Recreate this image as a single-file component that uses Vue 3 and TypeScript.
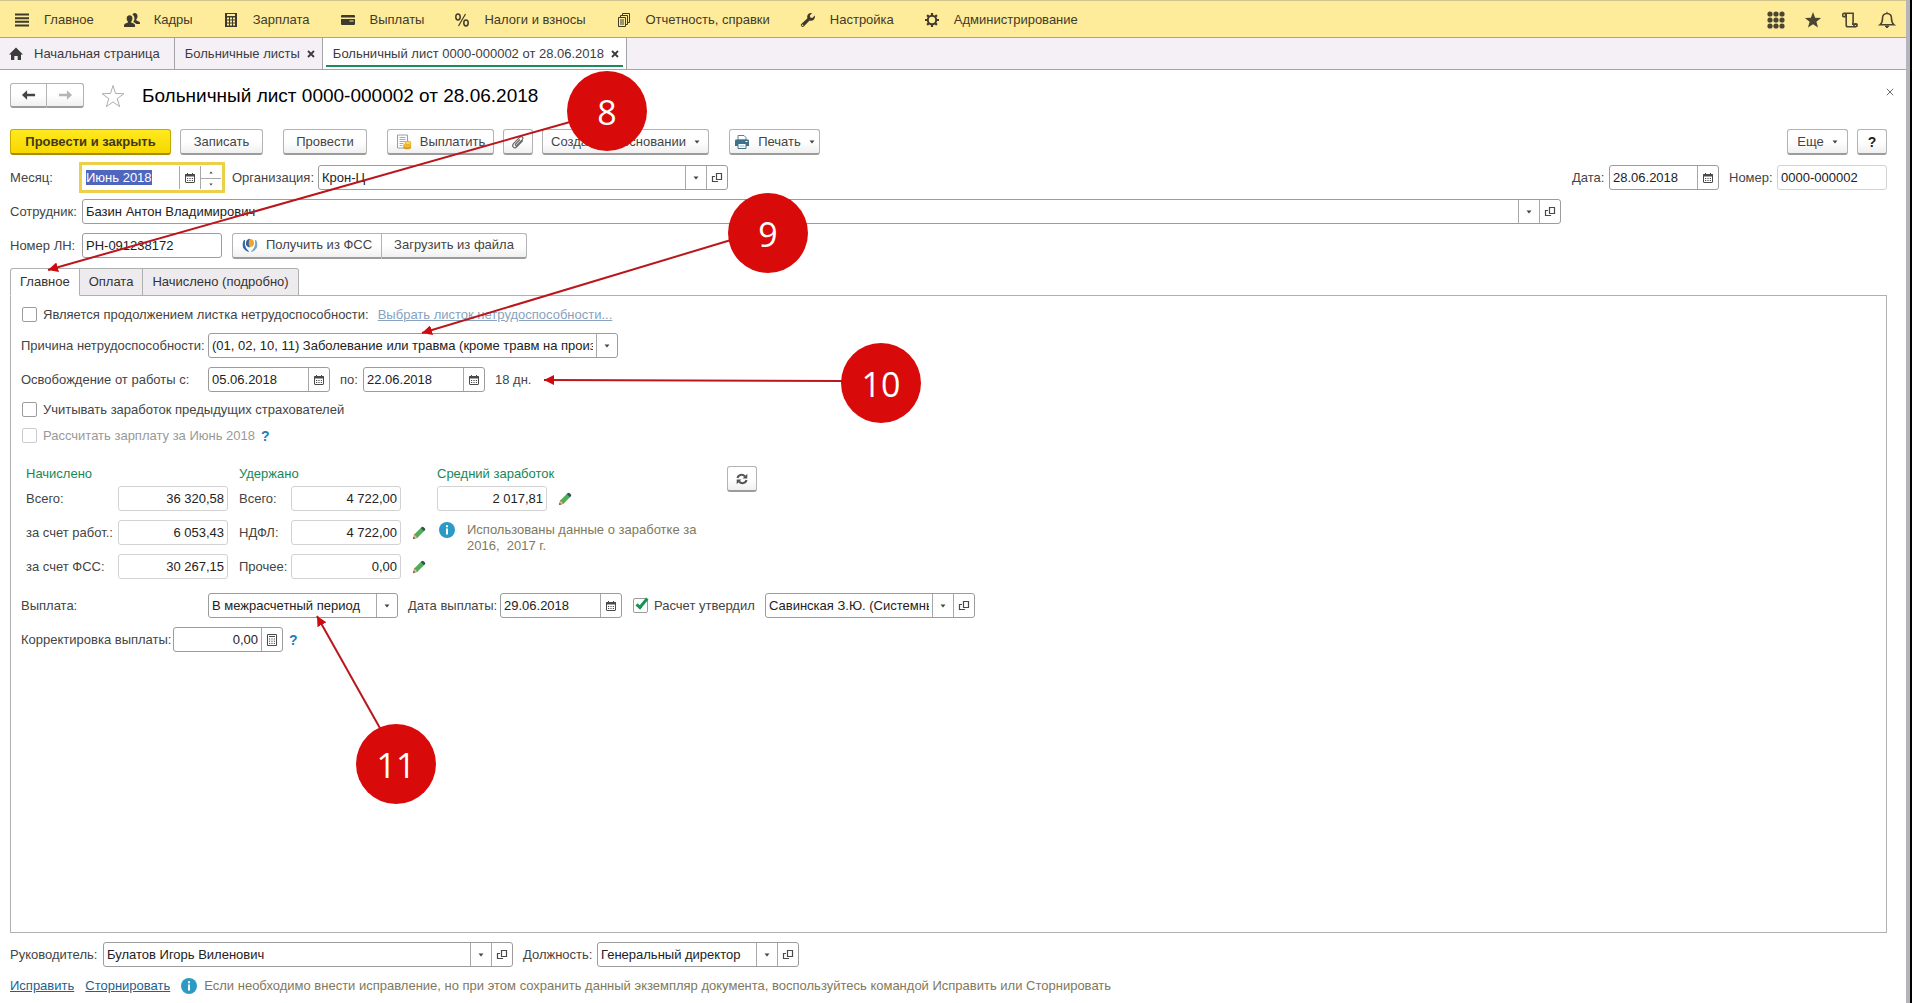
<script setup lang="ts">
import { onMounted, ref } from 'vue'

interface MenuItem {
  icon: string
  text: string
}

interface Callout {
  n: number
  cx: number
  cy: number
  fromX: number
  fromY: number
  toX: number
  toY: number
}

const menu: MenuItem[] = [
  { icon: 'lines', text: 'Главное' },
  { icon: 'people', text: 'Кадры' },
  { icon: 'calc', text: 'Зарплата' },
  { icon: 'card', text: 'Выплаты' },
  { icon: 'percent', text: 'Налоги и взносы' },
  { icon: 'docs', text: 'Отчетность, справки' },
  { icon: 'wrench', text: 'Настройка' },
  { icon: 'gear', text: 'Администрирование' },
]

const tools: MenuItem[] = [
  { icon: 'grid', text: 'Меню функций' },
  { icon: 'star', text: 'Избранное' },
  { icon: 'scroll', text: 'История' },
  { icon: 'bell', text: 'Оповещения' },
]

const callouts: Callout[] = [
  { n: 8, cx: 607, cy: 111, fromX: 570, fromY: 122, toX: 48, toY: 270 },
  { n: 9, cx: 768, cy: 233, fromX: 731, fromY: 240, toX: 422, toY: 333 },
  { n: 10, cx: 881, cy: 383, fromX: 844, fromY: 381, toX: 544, toY: 380 },
  { n: 11, cx: 396, cy: 764, fromX: 381, fromY: 730, toX: 317, toY: 616 },
]

const month = ref('Июнь 2018')
const monthInput = ref<HTMLInputElement | null>(null)
const employee = ref('Базин Антон Владимирович')
const sheetNumber = ref('РН-091238172')
const docDate = ref('28.06.2018')
const docNumber = ref('0000-000002')
const dateFrom = ref('05.06.2018')
const dateTo = ref('22.06.2018')
const payDate = ref('29.06.2018')
const isContinuation = ref(false)
const usePrevious = ref(false)
const approved = ref(true)

onMounted(() => {
  monthInput.value?.focus()
  monthInput.value?.select()
})
</script>

<template>
  <div class="app">
    <svg class="defs" width="0" height="0" aria-hidden="true">
      <symbol id="i-lines" viewBox="0 0 16 16"><path d="M1 2.500h14M1 6.200h14M1 9.800h14M1 13.500h14" stroke="currentColor" stroke-width="2" /></symbol>
      <symbol id="i-people" viewBox="0 0 16 16"><g fill="currentColor"><path d="M10.600 1c2 0 3 1.300 2.900 3.200 0 1.400-.5 2.500-1.200 3.100v1l3 1.400c.6.400.7 1 .7 2.300h-3.800c-.6-1-1.500-1.500-3-2.100.9-1.100 1.300-2.300 1.200-3.900-.1-1.500-.8-2.600-1.900-3.200.4-1.100 1.100-1.800 2.100-1.800z" /><path d="M5.600 3.300c1.900 0 2.900 1.300 2.800 3.100 0 1.300-.5 2.400-1.200 3v1l3 1.400c.7.400.9 1.200.9 3.200H0c0-2 .2-2.800.9-3.200l3-1.400v-1c-.7-.6-1.200-1.700-1.200-3 0-1.800 1-3.100 2.900-3.100z" /></g></symbol>
      <symbol id="i-calc" viewBox="0 0 16 16"><path d="M2 1h12v14H2z" fill="currentColor" /><path d="M4 3h8M4 6.500h2M7 6.500h2M10 6.500h2M4 9.500h2M7 9.500h2M10 9.500h2M4 12.500h2M7 12.500h2M10 12.500h2" stroke="#feec9a" stroke-width="1.800" /></symbol>
      <symbol id="i-card" viewBox="0 0 16 16"><path d="M2 3h12q1 0 1 1v1.500H1V4q0-1 1-1zM1 7h14v5q0 1-1 1H2q-1 0-1-1z" fill="currentColor" /><path d="M9.500 9h4" stroke="#feec9a" /></symbol>
      <symbol id="i-percent" viewBox="0 0 16 16"><g fill="none" stroke="currentColor" stroke-width="1.500"><ellipse cx="4" cy="5" rx="2.200" ry="2.900" /><ellipse cx="12" cy="11" rx="2.200" ry="2.900" /><path d="M11.500 2l-7 12" stroke-width="1.200" /></g></symbol>
      <symbol id="i-docs" viewBox="0 0 16 16"><g fill="none" stroke="currentColor"><path d="M2.500 5.500h7v9h-7zM4.500 5V3.500h7v9H10M6.500 3V1.500h7v9H12M4 8h4M4 10h4M4 12h4" /></g></symbol>
      <symbol id="i-wrench" viewBox="0 0 16 16"><path d="M14.800 3.600l-2.500 2.300-2-.4-.5-2L12 1.200C9.700.5 7.400 2 7.200 4.400c-.1.700 0 1.200.2 1.800L1.300 12c-1.500 1.500.9 3.900 2.500 2.500L9.600 8.500c3 1.200 6-1.700 5.200-4.900zM2.500 14a.8.8 0 1 1 .1-1.600.8.8 0 0 1-.1 1.600z" fill="currentColor" /></symbol>
      <symbol id="i-gear" viewBox="0 0 16 16"><g fill="none" stroke="currentColor"><circle cx="8" cy="8" r="4.200" stroke-width="2" /><path d="M8 1v2.500M8 12.500V15M1 8h2.500M12.500 8H15M3.100 3.100l1.700 1.700M11.200 11.200l1.700 1.700M12.900 3.100l-1.700 1.700M4.800 11.200l-1.700 1.700" stroke-width="2.200" /></g></symbol>
      <symbol id="i-grid" viewBox="0 0 18 18"><g fill="currentColor"><circle v-for="k in 9" :key="k" :cx="3 + ((k - 1) % 3) * 6" :cy="3 + Math.floor((k - 1) / 3) * 6" r="2.600" /></g></symbol>
      <symbol id="i-star" viewBox="0 0 18 18"><path d="M9 1l2.100 5.700 6 .2-4.700 3.800 1.600 5.900L9 13.200l-5 3.400 1.600-5.900L.9 6.900l6-.2z" fill="currentColor" /></symbol>
      <symbol id="i-scroll" viewBox="0 0 18 18"><g fill="none" stroke="currentColor" stroke-width="1.600"><path d="M1.800 5.800V3.500q0-1.300 1.300-1.300h9v9.500M1.800 5.800h2.700V2.500M5.200 2.500V14q0 1.800 1.800 1.800h7.500M11.800 14v-2.300M15.800 15.800v-2.600h-3.200" /><circle cx="14.300" cy="14.200" r="1.500" /></g></symbol>
      <symbol id="i-bell" viewBox="0 0 18 18"><path d="M9 2.500c-3 0-4.500 2-4.500 5 0 3.500-.8 5-2.500 6.300h14c-1.700-1.300-2.500-2.800-2.500-6.300 0-3-1.500-5-4.500-5z" fill="none" stroke="currentColor" stroke-width="1.600" /><path d="M9 .8v2M7 15h4l-2 2z" fill="currentColor" stroke="currentColor" /></symbol>
      <symbol id="i-home" viewBox="0 0 16 16"><path d="M8 1.500l7 7h-2V14H9.700v-4H6.300v4H3V8.500H1z" fill="currentColor" /></symbol>
      <symbol id="i-cal" viewBox="0 0 12 12"><path d="M2 2.500h8q.5 0 .5.500v7q0 .5-.5.500H2q-.5 0-.5-.5V3q0-.5.500-.5z" fill="#fff" stroke="#4a4a4a" /><path d="M1.500 2.500h9v1.500h-9zM3.500 1v1.500M8.500 1v1.500" fill="#4a4a4a" stroke="#4a4a4a" /><path d="M3 6.500h1.200M5.400 6.500h1.200M7.800 6.500H9M3 8.500h1.200M5.400 8.500h1.200M7.800 8.500H9" stroke="#4a4a4a" /></symbol>
      <symbol id="i-smallcalc" viewBox="0 0 12 12"><path d="M1.500.5h9v11h-9z" fill="none" stroke="#4a4a4a" /><path d="M3 2.500h6M3 5h1.200M5.400 5h1.200M7.800 5H9M3 7.200h1.200M5.400 7.200h1.200M7.800 7.200H9M3 9.400h1.200M5.400 9.400h1.200M7.800 9.400H9" stroke="#4a4a4a" /></symbol>
      <symbol id="i-open" viewBox="0 0 12 12"><path d="M5.500 1.500h5v6h-5zM4 4.500H1.500v5h5V9" fill="none" stroke="#4a4a4a" stroke-width="1.200" /></symbol>
      <symbol id="i-caret" viewBox="0 0 6 4"><path d="M.5.5h5L3 3.500z" fill="#444" /></symbol>
      <symbol id="i-left" viewBox="0 0 16 12"><path d="M1 6l5.500-5v3.600H15v2.800H6.500V11z" fill="currentColor" /></symbol>
      <symbol id="i-right" viewBox="0 0 16 12"><path d="M15 6L9.500 1v3.600H1v2.800h8.500V11z" fill="currentColor" /></symbol>
      <symbol id="i-outline" viewBox="0 0 24 24"><path d="M12 1.500l2.500 8 8.500.2-6.800 5 2.500 8L12 17.900l-6.700 4.800 2.500-8L1 9.700l8.500-.2z" fill="#fff" stroke="#a9b0b4" /></symbol>
      <symbol id="i-pay" viewBox="0 0 16 16"><path d="M1.500 1h10v13h-10z" fill="#fff" stroke="#8aa0b4" /><path d="M3.500 3.500h6M3.500 5.500h6M3.500 7.500h6M3.500 9.500h4M3.500 11.500h3" stroke="#8fb0cc" /><ellipse cx="11.200" cy="13" rx="4" ry="2.300" fill="#d99a1c" /><ellipse cx="11.200" cy="11.300" rx="4" ry="2.100" fill="#f0bb2f" /><ellipse cx="12" cy="9" rx="3" ry="1.900" fill="#f8d458" stroke="#cf9820" stroke-width=".6" /></symbol>
      <symbol id="i-clip" viewBox="0 0 16 16"><path d="M12.800 6.500l-6 6.300c-2.500 2.400-5.600-.6-3.300-3.100l6.300-6.500c1.800-1.700 4.300.5 2.600 2.400L7 11.200c-1 .9-2.300-.2-1.400-1.200L10 5.500" fill="none" stroke="#6b6b6b" stroke-width="1.200" /></symbol>
      <symbol id="i-print" viewBox="0 0 16 16"><path d="M4 1.500h6l2 2V6H4z" fill="#fff" stroke="#5c7e92" /><path d="M2 5.500h12q1 0 1 1V12H1V6.500q0-1 1-1z" fill="#41708b" /><path d="M4 9.500h8v5H4z" fill="#fff" stroke="#41708b" /><path d="M11.500 7.500h2" stroke="#fff" /><path d="M5.500 12h5" stroke="#9ab2c0" /></symbol>
      <symbol id="i-fss" viewBox="0 0 16 16"><path d="M2.500 3C.2 7 .5 13 6.500 14.300 2.800 11.500 2 7.500 2.500 3z" fill="#2b5fa3" stroke="#2b5fa3" /><path d="M13.500 3c2.300 4 2 10-4 11.300C13.200 11.500 14 7.500 13.500 3z" fill="#6ea3cc" stroke="#6ea3cc" /><circle cx="8" cy="6" r="4" fill="#eda52f" /><path d="M8 10.500c-5.500-.5-5.500-7.500 0-9C6.300 4.500 6.300 8 8 10.500z" fill="#33639c" /></symbol>
      <symbol id="i-pencil" viewBox="0 0 16 16"><path d="M1.500 14.500l1.300-5 7.700-7.700 3.700 3.700-7.700 7.700z" fill="#4fae5b" /><path d="M10 2.300l1.300-1.300q1-.6 2 .3l1.500 1.500q.8 1 .2 1.900L13.700 6z" fill="#34504f" /><path d="M2.800 9.500l3.700 3.700-5 1.300z" fill="#edc08a" stroke="#8a6a45" stroke-width=".5" /><path d="M2 12.500L3.500 14l-2.200.7z" fill="#333" /></symbol>
      <symbol id="i-info" viewBox="0 0 16 16"><circle cx="8" cy="8" r="8" fill="#2b9ac4" /><path d="M8 3.200v2M8 6.500v6" stroke="#fff" stroke-width="2" /></symbol>
      <symbol id="i-refresh" viewBox="0 0 12 12"><g fill="none" stroke="#555" stroke-width="2"><path d="M1.500 5C2.200 1.600 6.500.8 9 3.500M10.500 7C9.800 10.400 5.500 11.200 3 8.500" /></g><path d="M11.300.8v4.700H6.600zM.7 11.200V6.500h4.700z" fill="#555" /></symbol>
      <symbol id="i-x" viewBox="0 0 10 10"><path d="M1 1l8 8M9 1L1 9" stroke="currentColor" /></symbol>
      <symbol id="i-xbold" viewBox="0 0 8 8"><path d="M1 1l6 6M7 1L1 7" stroke="currentColor" stroke-width="1.800" /></symbol>
    </svg>

    <nav class="menu">
      <a v-for="m in menu" :key="m.icon" href="#" class="menu-item">
        <svg class="ic16"><use :href="'#i-' + m.icon" /></svg><span>{{ m.text }}</span>
      </a>
      <div class="tools">
        <button v-for="t in tools" :key="t.icon" type="button" class="bare" :aria-label="t.text">
          <svg class="ic18"><use :href="'#i-' + t.icon" /></svg>
        </button>
      </div>
    </nav>

    <div class="windows">
      <a href="#" class="wtab home"><svg class="ic16"><use href="#i-home" /></svg>Начальная страница</a>
      <div class="wtab"><a href="#">Больничные листы</a><button type="button" class="bare close" aria-label="Закрыть"><svg><use href="#i-xbold" /></svg></button></div>
      <div class="wtab active"><a href="#">Больничный лист 0000-000002 от 28.06.2018</a><button type="button" class="bare close" aria-label="Закрыть"><svg><use href="#i-xbold" /></svg></button></div>
    </div>

    <main class="form">
      <header class="title">
        <div class="group nav">
          <button type="button" class="btn" aria-label="Назад"><svg><use href="#i-left" /></svg></button>
          <button type="button" class="btn forward" aria-label="Вперед"><svg><use href="#i-right" /></svg></button>
        </div>
        <button type="button" class="bare fav" aria-label="В избранное"><svg><use href="#i-outline" /></svg></button>
        <h1>Больничный лист 0000-000002 от 28.06.2018</h1>
        <button type="button" class="bare form-close" aria-label="Закрыть форму"><svg><use href="#i-x" /></svg></button>
      </header>

      <div class="commands">
        <button type="button" class="btn primary">Провести и закрыть</button>
        <button type="button" class="btn save">Записать</button>
        <button type="button" class="btn post">Провести</button>
        <button type="button" class="btn pay"><svg class="ic16"><use href="#i-pay" /></svg>Выплатить</button>
        <button type="button" class="btn square" aria-label="Файлы"><svg class="ic16"><use href="#i-clip" /></svg></button>
        <button type="button" class="btn create">Создать на основании<svg class="caret"><use href="#i-caret" /></svg></button>
        <button type="button" class="btn print"><svg class="ic16"><use href="#i-print" /></svg>Печать<svg class="caret"><use href="#i-caret" /></svg></button>
        <button type="button" class="btn more">Еще<svg class="caret"><use href="#i-caret" /></svg></button>
        <button type="button" class="btn square help">?</button>
      </div>

      <div class="row head-row">
        <label class="lbl-head" for="month">Месяц:</label>
        <div class="field w140 focused">
          <input id="month" ref="monthInput" v-model="month" type="text" />
          <button type="button" class="fbtn" aria-label="Выбрать месяц"><svg class="ic12"><use href="#i-cal" /></svg></button>
          <div class="spin">
            <button type="button" aria-label="Следующий месяц"><svg class="up"><use href="#i-caret" /></svg></button>
            <button type="button" aria-label="Предыдущий месяц"><svg><use href="#i-caret" /></svg></button>
          </div>
        </div>
        <label class="lbl-org" for="org">Организация:</label>
        <div class="field w410">
          <select id="org"><option>Крон-Ц</option></select><span class="fbtn"><svg class="caret"><use href="#i-caret" /></svg></span>
          <button type="button" class="fbtn" aria-label="Открыть"><svg class="ic12"><use href="#i-open" /></svg></button>
        </div>
        <label class="lbl-date" for="date">Дата:</label>
        <div class="field w110">
          <input id="date" v-model="docDate" type="text" />
          <button type="button" class="fbtn" aria-label="Выбрать дату"><svg class="ic12"><use href="#i-cal" /></svg></button>
        </div>
        <label class="lbl-num" for="num">Номер:</label>
        <div class="field w110 light"><input id="num" v-model="docNumber" type="text" /></div>
      </div>

      <div class="row head-row">
        <label class="lbl-head" for="emp">Сотрудник:</label>
        <div class="field employee">
          <select id="emp"><option>{{ employee }}</option></select><span class="fbtn"><svg class="caret"><use href="#i-caret" /></svg></span>
          <button type="button" class="fbtn" aria-label="Открыть"><svg class="ic12"><use href="#i-open" /></svg></button>
        </div>
      </div>

      <div class="row head-row">
        <label class="lbl-head" for="sheet">Номер ЛН:</label>
        <div class="field w140"><input id="sheet" v-model="sheetNumber" type="text" /></div>
        <div class="group fss">
          <button type="button" class="btn"><svg class="ic16"><use href="#i-fss" /></svg>Получить из ФСС</button>
          <button type="button" class="btn">Загрузить из файла</button>
        </div>
      </div>

      <div class="tabs" role="tablist">
        <button type="button" role="tab" class="tab selected" aria-selected="true">Главное</button>
        <button type="button" role="tab" class="tab">Оплата</button>
        <button type="button" role="tab" class="tab">Начислено (подробно)</button>
      </div>

      <section class="panel">
        <div class="check-row first">
          <label><input v-model="isContinuation" type="checkbox" />Является продолжением листка нетрудоспособности:</label>
          <a href="#" class="choose">Выбрать листок нетрудоспособности...</a>
        </div>

        <div class="row">
          <label class="lbl-main" for="reason">Причина нетрудоспособности:</label>
          <div class="field w410">
            <select id="reason"><option>(01, 02, 10, 11) Заболевание или травма (кроме травм на производстве)</option></select><span class="fbtn"><svg class="caret"><use href="#i-caret" /></svg></span>
          </div>
        </div>

        <div class="row">
          <label class="lbl-main" for="from">Освобождение от работы с:</label>
          <div class="field w122">
            <input id="from" v-model="dateFrom" type="text" />
            <button type="button" class="fbtn" aria-label="Выбрать дату"><svg class="ic12"><use href="#i-cal" /></svg></button>
          </div>
          <label class="lbl-to" for="to">по:</label>
          <div class="field w122">
            <input id="to" v-model="dateTo" type="text" />
            <button type="button" class="fbtn" aria-label="Выбрать дату"><svg class="ic12"><use href="#i-cal" /></svg></button>
          </div>
          <span class="days">18 дн.</span>
        </div>

        <div class="check-row"><label><input v-model="usePrevious" type="checkbox" />Учитывать заработок предыдущих страхователей</label></div>
        <div class="check-row">
          <label class="off"><input type="checkbox" disabled />Рассчитать зарплату за Июнь 2018</label>
          <a href="#" class="hint">?</a>
        </div>

        <div class="totals">
          <div class="block accrued">
            <h2>Начислено</h2>
            <div class="row"><label for="a1">Всего:</label><div class="field w110 light num"><input id="a1" type="text" value="36 320,58" readonly /></div></div>
            <div class="row"><label for="a2">за счет работ.:</label><div class="field w110 light num"><input id="a2" type="text" value="6 053,43" readonly /></div></div>
            <div class="row"><label for="a3">за счет ФСС:</label><div class="field w110 light num"><input id="a3" type="text" value="30 267,15" readonly /></div></div>
          </div>
          <div class="block withheld">
            <h2>Удержано</h2>
            <div class="row"><label for="b1">Всего:</label><div class="field w110 light num"><input id="b1" type="text" value="4 722,00" readonly /></div></div>
            <div class="row"><label for="b2">НДФЛ:</label><div class="field w110 light num"><input id="b2" type="text" value="4 722,00" readonly /></div><button type="button" class="bare edit" aria-label="Изменить НДФЛ"><svg><use href="#i-pencil" /></svg></button></div>
            <div class="row"><label for="b3">Прочее:</label><div class="field w110 light num"><input id="b3" type="text" value="0,00" readonly /></div><button type="button" class="bare edit" aria-label="Изменить прочее"><svg><use href="#i-pencil" /></svg></button></div>
          </div>
          <div class="block average">
            <h2><label for="avg">Средний заработок</label></h2>
            <div class="row"><div class="field w110 light num"><input id="avg" type="text" value="2 017,81" readonly /></div><button type="button" class="bare edit" aria-label="Изменить средний заработок"><svg><use href="#i-pencil" /></svg></button></div>
            <div class="note"><svg class="ic16"><use href="#i-info" /></svg><p>Использованы данные о заработке за 2016,&nbsp; 2017 г.</p></div>
          </div>
          <button type="button" class="btn square refresh" aria-label="Пересчитать"><svg class="ic12"><use href="#i-refresh" /></svg></button>
        </div>

        <div class="row">
          <label class="lbl-main" for="payout">Выплата:</label>
          <div class="field w190">
            <select id="payout"><option>В межрасчетный период</option></select><span class="fbtn"><svg class="caret"><use href="#i-caret" /></svg></span>
          </div>
          <label class="lbl-pay" for="paydate">Дата выплаты:</label>
          <div class="field w122">
            <input id="paydate" v-model="payDate" type="text" />
            <button type="button" class="fbtn" aria-label="Выбрать дату"><svg class="ic12"><use href="#i-cal" /></svg></button>
          </div>
          <label class="approve"><input v-model="approved" type="checkbox" />Расчет утвердил</label>
          <div class="field w210">
            <select aria-label="Расчет утвердил"><option>Савинская З.Ю. (Системный администратор)</option></select><span class="fbtn"><svg class="caret"><use href="#i-caret" /></svg></span>
            <button type="button" class="fbtn" aria-label="Открыть"><svg class="ic12"><use href="#i-open" /></svg></button>
          </div>
        </div>

        <div class="row">
          <label class="lbl-corr" for="corr">Корректировка выплаты:</label>
          <div class="field w110 num">
            <input id="corr" type="text" value="0,00" />
            <button type="button" class="fbtn" aria-label="Калькулятор"><svg class="ic12"><use href="#i-smallcalc" /></svg></button>
          </div>
          <a href="#" class="hint">?</a>
        </div>
      </section>

      <div class="row signer">
        <label class="lbl-boss" for="boss">Руководитель:</label>
        <div class="field w410">
          <select id="boss"><option>Булатов Игорь Виленович</option></select><span class="fbtn"><svg class="caret"><use href="#i-caret" /></svg></span>
          <button type="button" class="fbtn" aria-label="Открыть"><svg class="ic12"><use href="#i-open" /></svg></button>
        </div>
        <label class="lbl-post" for="post">Должность:</label>
        <div class="field w202">
          <select id="post"><option>Генеральный директор</option></select><span class="fbtn"><svg class="caret"><use href="#i-caret" /></svg></span>
          <button type="button" class="fbtn" aria-label="Открыть"><svg class="ic12"><use href="#i-open" /></svg></button>
        </div>
      </div>

      <footer class="foot">
        <a href="#">Исправить</a>
        <a href="#">Сторнировать</a>
        <svg class="ic16"><use href="#i-info" /></svg>
        <p>Если необходимо внести исправление, но при этом сохранить данный экземпляр документа, воспользуйтесь командой Исправить или Сторнировать</p>
      </footer>
    </main>

    <svg class="callouts">
      <defs>
        <marker id="tip" viewBox="0 0 10 10" refX="10" refY="5" markerWidth="10" markerHeight="10" markerUnits="userSpaceOnUse" orient="auto">
          <path d="M0 0L10 5L0 10z" fill="#cf0a0e" />
        </marker>
      </defs>
      <g v-for="c in callouts" :key="c.n">
        <line :x1="c.fromX" :y1="c.fromY" :x2="c.toX" :y2="c.toY" marker-end="url(#tip)" />
        <circle :cx="c.cx" :cy="c.cy" r="40" />
        <text :x="c.cx" :y="c.cy + 14">{{ c.n }}</text>
      </g>
    </svg>
  </div>
</template>

<style>
html,
body {
  margin: 0;
  background: #fff;
}
</style>

<style scoped>
.app {
  position: relative;
  box-sizing: border-box;
  display: flex;
  flex-direction: column;
  min-height: 100vh;
  border-right: 2px solid #000;
  box-shadow: inset -4px 0 #b4b4bc;
  padding-right: 4px;
  background: #fff;
  color: #444;
  font: 13px/16px "Liberation Sans", Arial, sans-serif;
}
.app *,
.app *::before {
  box-sizing: border-box;
}
.defs {
  position: absolute;
}
svg {
  display: block;
  flex: none;
}
button,
input,
select {
  font: inherit;
  color: inherit;
  margin: 0;
}
h1,
h2,
p {
  margin: 0;
  font-weight: normal;
}
.ic12 {
  width: 12px;
  height: 12px;
}
.ic16 {
  width: 16px;
  height: 16px;
}
.ic18 {
  width: 18px;
  height: 18px;
}
.caret {
  width: 6px;
  height: 4px;
}
.bare {
  border: 0;
  padding: 0;
  background: none;
}

.menu {
  display: flex;
  align-items: center;
  gap: 30px;
  height: 38px;
  padding: 1px 10px 0 14px;
  border-top: 1px solid #cfc48e;
  border-bottom: 1px solid #b8a85c;
  background: #feec9a;
}
.menu-item {
  display: flex;
  align-items: center;
  gap: 14px;
  color: #3f3b2c;
  text-decoration: none;
  white-space: nowrap;
}
.tools {
  display: flex;
  gap: 19px;
  margin-left: auto;
  color: #4a4632;
}

.windows {
  display: flex;
  height: 32px;
  border-bottom: 1px solid #a3a3a8;
  background: #f5f0f5;
}
.wtab {
  display: flex;
  align-items: center;
  gap: 7px;
  padding: 0 7px 0 10px;
  border-right: 1px solid #a3a3a8;
  color: #3c3c3c;
  text-decoration: none;
  white-space: nowrap;
}
.wtab a {
  color: inherit;
  text-decoration: none;
}
.wtab.home {
  gap: 10px;
  padding: 0 14px 0 8px;
}
.wtab.active {
  position: relative;
  background: #fff;
}
.wtab.active::before {
  content: "";
  position: absolute;
  right: 3px;
  bottom: 2px;
  left: 3px;
  height: 2px;
  background: #1d8a5c;
}
.close svg {
  width: 8px;
  height: 8px;
}

.form {
  display: flex;
  flex: 1;
  flex-direction: column;
  padding: 13px 19px 9px 10px;
}
.title {
  display: flex;
  align-items: center;
  height: 25px;
}
.title h1 {
  flex: 1;
  margin-left: 17px;
  color: #000;
  font-size: 19px;
  line-height: 24px;
}
.fav {
  margin-left: 17px;
}
.fav svg {
  width: 24px;
  height: 24px;
}
.form-close {
  margin: -8px -7px 0 0;
}
.form-close svg {
  width: 8px;
  height: 8px;
}

.btn {
  display: flex;
  align-items: center;
  justify-content: center;
  gap: 8px;
  height: 26px;
  padding: 0 10px;
  border: 1px solid #b3b3b3;
  border-bottom: 2px solid #9c9c9c;
  border-radius: 3px;
  background: linear-gradient(#fff 50%, #f0f0f0);
  color: #444;
  white-space: nowrap;
}
.group {
  display: flex;
}
.group .btn:first-child {
  border-radius: 3px 0 0 3px;
}
.group .btn:last-child {
  border-left: 0;
  border-radius: 0 3px 3px 0;
}
.nav .btn {
  width: 37px;
  height: 25px;
  padding: 0;
}
.nav svg {
  width: 15px;
  height: 12px;
}
.nav .forward {
  color: #b5b5b5;
}
.commands {
  display: flex;
  gap: 9px;
  margin: 21px 0 10px;
}
.primary {
  width: 161px;
  border-color: #c9a800;
  border-bottom-color: #a88c00;
  background: linear-gradient(#ffe91f, #f7d800);
  color: #3f3a1a;
  font-weight: bold;
}
.save {
  width: 83px;
}
.post {
  width: 84px;
  margin: 0 11px;
}
.pay {
  width: 107px;
}
.square {
  width: 30px;
  padding: 0;
}
.create {
  width: 167px;
}
.print {
  width: 91px;
  margin-left: 11px;
}
.more {
  width: 61px;
  margin-left: auto;
}
.help {
  color: #222;
  font-size: 14px;
  font-weight: bold;
}

.row {
  display: flex;
  align-items: center;
  height: 25px;
  white-space: nowrap;
}
.head-row {
  margin-bottom: 9px;
}
.field {
  display: flex;
  flex: none;
  height: 25px;
  border: 1px solid #9c9c9c;
  border-radius: 3px;
  background: #fff;
  color: #222;
}
.field.light {
  border-color: #d2d2d2;
}
.field input,
.field select {
  flex: 1;
  width: 0;
  min-width: 0;
  height: 23px;
  padding: 0 3px;
  border: 0;
  border-radius: 3px;
  outline: 0;
  background: none;
  appearance: none;
}
.field.num input {
  text-align: right;
}
.focused {
  outline: 3px solid #ecd04a;
  border-color: #fff;
  border-radius: 0;
}
.focused input::selection {
  background: #4e66bd;
  color: #fff;
}
.fbtn {
  display: flex;
  flex: none;
  align-items: center;
  justify-content: center;
  width: 21px;
  padding: 0;
  border: 0;
  border-left: 1px solid #a8a8a8;
  background: none;
}
.spin {
  width: 21px;
  border-left: 1px solid #a8a8a8;
}
.spin button {
  display: flex;
  align-items: center;
  justify-content: center;
  width: 100%;
  height: 12px;
  padding: 0;
  border: 0;
  background: none;
}
.spin button + button {
  height: 11px;
  border-top: 1px solid #a8a8a8;
}
.spin svg {
  width: 4px;
  height: 3px;
}
.spin .up {
  transform: rotate(180deg);
}
.w110 { width: 110px; }
.w122 { width: 122px; }
.w140 { width: 140px; }
.w190 { width: 190px; }
.w202 { width: 202px; }
.w210 { width: 210px; }
.w410 { width: 410px; }
.lbl-head { width: 72px; }
.lbl-org { width: 96px; padding-left: 10px; }
.lbl-date { width: 37px; margin-left: auto; }
.lbl-num { width: 58px; padding-left: 10px; }
.lbl-main { width: 187px; }
.lbl-to { width: 33px; padding-left: 10px; }
.lbl-pay { width: 102px; padding-left: 10px; }
.lbl-corr { width: 152px; }
.lbl-boss { width: 93px; }
.lbl-post { width: 84px; padding-left: 10px; }
.employee {
  flex: 1;
  max-width: 1479px;
}
.fss {
  margin-left: 10px;
}
.fss .btn:first-child {
  width: 150px;
  padding: 0 6px;
}
.fss .btn:last-child {
  width: 145px;
}

.tabs {
  display: flex;
  margin-top: 1px;
}
.tab {
  height: 28px;
  padding: 0 9px;
  border: 1px solid #b0b0b0;
  border-left-width: 0;
  background: #eeebee;
  color: #333;
}
.tab:first-child {
  border-left-width: 1px;
  border-radius: 3px 0 0;
}
.tab:last-child {
  border-radius: 0 3px 0 0;
}
.tab.selected {
  position: relative;
  border-bottom-color: #fff;
  background: #fff;
}
.panel {
  display: flex;
  flex: 1;
  flex-direction: column;
  gap: 9px;
  margin-top: -1px;
  padding: 10px;
  border: 1px solid #b0b0b0;
}
.check-row {
  display: flex;
  align-items: center;
  height: 17px;
  white-space: nowrap;
}
.check-row.first {
  margin-bottom: 1px;
}
label:has(input) {
  display: flex;
  align-items: center;
}
input[type="checkbox"] {
  width: 15px;
  height: 15px;
  margin: 0 6px 0 1px;
  border: 1px solid #9c9c9c;
  border-radius: 2px;
  background: #fff;
  appearance: none;
}
input[type="checkbox"]:checked {
  position: relative;
}
input[type="checkbox"]:checked::before {
  content: "";
  position: absolute;
  bottom: 3px;
  left: 5px;
  width: 6px;
  height: 13px;
  border: solid #149455;
  border-width: 0 3px 3px 0;
  transform: rotate(40deg);
}
.off {
  color: #999;
}
input[type="checkbox"]:disabled {
  border-color: #ccc;
}
.choose {
  margin-left: 9px;
  color: #86a3bf;
}
.days {
  margin-left: 10px;
}
.hint {
  margin-left: 6px;
  color: #1d7fb5;
  font-size: 14px;
  font-weight: bold;
  text-decoration: none;
}

.totals {
  display: flex;
  align-items: flex-start;
  margin: 13px 0 5px 5px;
}
.block {
  display: flex;
  flex-direction: column;
  gap: 9px;
}
.block h2 {
  height: 16px;
  margin-bottom: -5px;
  color: #16875a;
  font-size: 13px;
}
.accrued {
  width: 213px;
}
.accrued .row label {
  width: 92px;
}
.withheld {
  width: 198px;
}
.withheld .row label {
  width: 52px;
}
.average {
  width: 290px;
}
.edit {
  margin-left: 11px;
}
.edit svg {
  width: 14px;
  height: 14px;
}
.note {
  display: flex;
  gap: 12px;
  padding: 2px 0 0 2px;
  color: #7f795c;
}
.note p {
  width: 240px;
}
.approve {
  width: 143px;
  padding-left: 10px;
}

.signer {
  margin-top: 9px;
}
.foot {
  display: flex;
  align-items: center;
  height: 16px;
  margin-top: 11px;
  white-space: nowrap;
}
.foot a {
  margin-right: 11px;
  color: #1d6191;
}
.foot svg {
  margin-right: 7px;
}
.foot p {
  color: #7f795c;
}

.callouts {
  position: absolute;
  top: 0;
  left: 0;
  width: 100%;
  height: 100%;
  pointer-events: none;
}
.callouts line {
  stroke: #b9171c;
  stroke-width: 2;
}
.callouts circle {
  fill: #d80a0a;
}
.callouts text {
  fill: #fff;
  font: 500 34px "Open Sans", "Noto Sans", sans-serif;
  text-anchor: middle;
}
</style>
